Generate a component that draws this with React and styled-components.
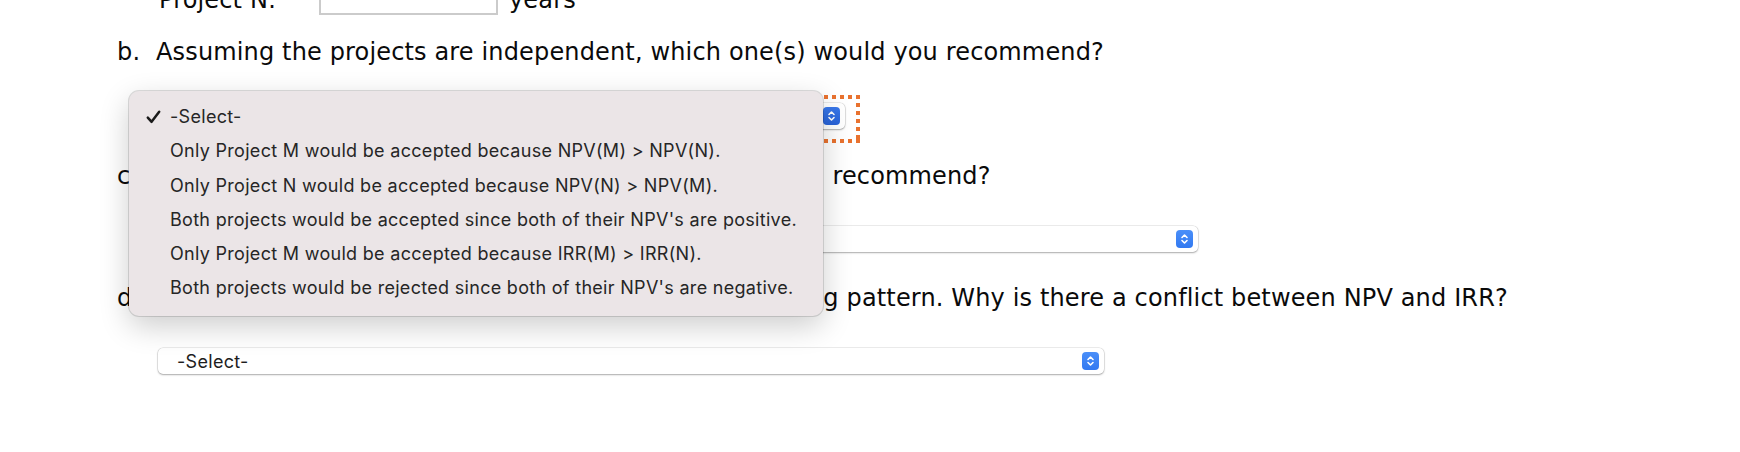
import React from "react";
import styled, { createGlobalStyle } from "styled-components";

const GlobalStyle = createGlobalStyle`
  html, body { margin: 0; padding: 0; background: #ffffff; overflow: hidden; }
  body { width: 1740px; height: 452px; }
`;

const Page = styled.div`
  margin-top: -15px;
  padding-left: 117px;
  font-family: "DejaVu Sans", Verdana, sans-serif;
  font-size: 24px;
  letter-spacing: 0.15px;
  color: #0a0a0a;
`;

const TopRow = styled.div`
  display: flex;
  align-items: center;
  height: 30px;
  padding-left: 42px;
`;

const RowLabel = styled.span`
  width: 160px;
  line-height: 24px;
  white-space: nowrap;
`;

const TextInput = styled.div`
  width: 175px;
  height: 26px;
  border: 2px solid #cbcbcb;
  background: #fff;
  margin-right: 11px;
`;

const Question = styled.div`
  margin-top: ${(p) => p.$top}px;
`;

const QuestionLine = styled.div`
  display: flex;
  line-height: 24px;
  white-space: nowrap;
`;

const Marker = styled.span`
  width: 39px;
  flex: none;
`;

const AnswerRow = styled.div`
  margin-top: ${(p) => p.$gap}px;
  padding-left: 41px;
`;

const SelectHolder = styled.div`
  position: relative;
  width: ${(p) => p.$width}px;
`;

const FocusRing = styled.div`
  position: absolute;
  top: -8px;
  bottom: -14px;
  left: -14px;
  right: -15px;
  pointer-events: none;
  background:
    repeating-linear-gradient(90deg, #e9722f 0 4px, transparent 4px 8px) left top / 100% 4px no-repeat,
    repeating-linear-gradient(90deg, #e9722f 0 4px, transparent 4px 8px) left bottom / 100% 4px no-repeat,
    repeating-linear-gradient(180deg, #e9722f 0 4px, transparent 4px 8px) left top / 4px 100% no-repeat,
    repeating-linear-gradient(180deg, #e9722f 0 4px, transparent 4px 8px) right top / 4px 100% no-repeat;
`;

const SelectBox = styled.div`
  position: relative;
  display: flex;
  align-items: center;
  justify-content: space-between;
  height: 26px;
  box-sizing: border-box;
  padding: 0 5px 0 19px;
  background: #ffffff;
  border-radius: 5px;
  box-shadow: 0 0 0 0.5px rgba(0, 0, 0, 0.14), 0 1px 2px rgba(0, 0, 0, 0.28);
  font-family: Inter, "Liberation Sans", sans-serif;
  font-size: 18px;
  letter-spacing: 0.3px;
  color: #1e1e1e;
`;

const Stepper = styled.span`
  display: flex;
  align-items: center;
  justify-content: center;
  width: 17px;
  height: 18px;
  border-radius: 4px;
  background: ${(p) =>
    p.$dim ? "linear-gradient(#3a78ea, #2862d8)" : "linear-gradient(#4a8ff9, #3279f1)"};
`;

const Menu = styled.div`
  position: absolute;
  left: -29px;
  top: -12px;
  width: 694px;
  box-sizing: border-box;
  padding: 9px 0 10px;
  background: #ebe5e7;
  border-radius: 10px;
  box-shadow: 0 0 0 1px rgba(0, 0, 0, 0.13), 0 10px 30px rgba(0, 0, 0, 0.2);
  font-family: Inter, "Liberation Sans", sans-serif;
  font-size: 18px;
  letter-spacing: 0.3px;
  color: #262626;
  z-index: 5;
`;

const MenuItem = styled.div`
  position: relative;
  height: 34.3px;
  line-height: 34px;
  padding-left: 41px;
  white-space: nowrap;
`;

const Check = styled.svg`
  position: absolute;
  left: 17px;
  top: 10px;
`;

const StepperIcon = () => (
  <svg width="9" height="12" viewBox="0 0 9 12" fill="none">
    <path d="M2 4.5 L4.5 2 L7 4.5" stroke="#fff" strokeWidth="1.6" strokeLinecap="round" strokeLinejoin="round" />
    <path d="M2 7.5 L4.5 10 L7 7.5" stroke="#fff" strokeWidth="1.6" strokeLinecap="round" strokeLinejoin="round" />
  </svg>
);

const Select = ({ value, dim }) => (
  <SelectBox>
    <span>{value}</span>
    <Stepper $dim={dim}>
      <StepperIcon />
    </Stepper>
  </SelectBox>
);

const options = [
  "-Select-",
  "Only Project M would be accepted because NPV(M) > NPV(N).",
  "Only Project N would be accepted because NPV(N) > NPV(M).",
  "Both projects would be accepted since both of their NPV's are positive.",
  "Only Project M would be accepted because IRR(M) > IRR(N).",
  "Both projects would be rejected since both of their NPV's are negative.",
];

export default function App() {
  return (
    <>
      <GlobalStyle />
      <Page>
        <TopRow>
          <RowLabel>Project N:</RowLabel>
          <TextInput />
          <span>years</span>
        </TopRow>

        <Question $top={25}>
          <QuestionLine>
            <Marker>b.</Marker>
            <span>Assuming the projects are independent, which one(s) would you recommend?</span>
          </QuestionLine>
          <AnswerRow $gap={39}>
            <SelectHolder $width={687}>
              <FocusRing />
              <Select value="-Select-" dim />
              <Menu>
                {options.map((o, i) => (
                  <MenuItem key={o}>
                    {i === 0 && (
                      <Check width="15" height="14" viewBox="0 0 15 14">
                        <path d="M1.8 7.6 L5.6 11.8 L13.2 1.8" stroke="#1a1a1a" strokeWidth="2.5" fill="none" strokeLinecap="round" strokeLinejoin="round" />
                      </Check>
                    )}
                    {o}
                  </MenuItem>
                ))}
              </Menu>
            </SelectHolder>
          </AnswerRow>
        </Question>

        <Question $top={35}>
          <QuestionLine>
            <Marker>c.</Marker>
            <span>If the projects are mutually exclusive, which would you recommend?</span>
          </QuestionLine>
          <AnswerRow $gap={38}>
            <SelectHolder $width={1040}>
              <Select value="-Select-" />
            </SelectHolder>
          </AnswerRow>
        </Question>

        <Question $top={34}>
          <QuestionLine>
            <Marker>d.</Marker>
            <span>Notice that the projects have the same cash flow timing pattern. Why is there a conflict between NPV and IRR?</span>
          </QuestionLine>
          <AnswerRow $gap={38}>
            <SelectHolder $width={946}>
              <Select value="-Select-" />
            </SelectHolder>
          </AnswerRow>
        </Question>
      </Page>
    </>
  );
}
